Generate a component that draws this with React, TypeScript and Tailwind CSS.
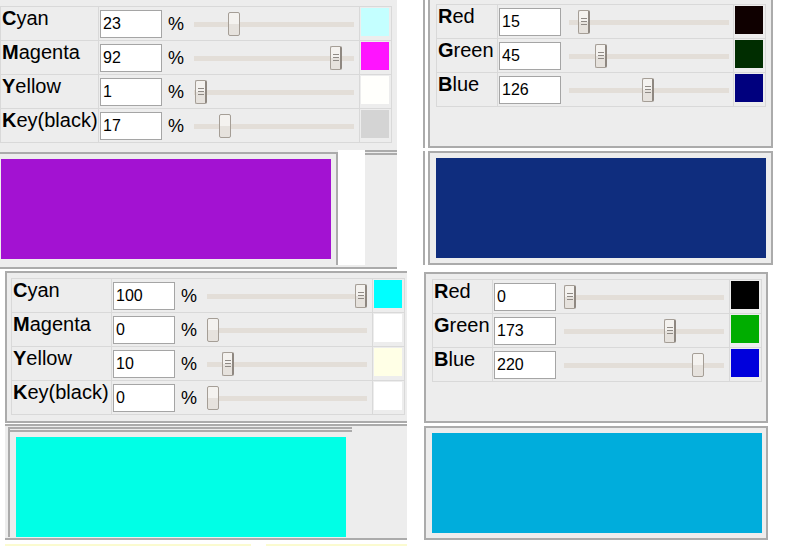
import React from 'react'

type Row = {
  head: string
  rest: string
  value: number
  max: number
  grip: boolean
  swatch: string
}

const cmykTop: Row[] = [
  { head: 'C', rest: 'yan', value: 23, max: 100, grip: false, swatch: '#c4ffff' },
  { head: 'M', rest: 'agenta', value: 92, max: 100, grip: true, swatch: '#ff14ff' },
  { head: 'Y', rest: 'ellow', value: 1, max: 100, grip: true, swatch: '#fffffc' },
  { head: 'K', rest: 'ey(black)', value: 17, max: 100, grip: false, swatch: '#d4d4d4' },
]

const rgbTop: Row[] = [
  { head: 'R', rest: 'ed', value: 15, max: 255, grip: true, swatch: '#0f0000' },
  { head: 'G', rest: 'reen', value: 45, max: 255, grip: true, swatch: '#002d00' },
  { head: 'B', rest: 'lue', value: 126, max: 255, grip: true, swatch: '#00007e' },
]

const cmykBottom: Row[] = [
  { head: 'C', rest: 'yan', value: 100, max: 100, grip: true, swatch: '#00ffff' },
  { head: 'M', rest: 'agenta', value: 0, max: 100, grip: false, swatch: '#ffffff' },
  { head: 'Y', rest: 'ellow', value: 10, max: 100, grip: true, swatch: '#ffffe6' },
  { head: 'K', rest: 'ey(black)', value: 0, max: 100, grip: false, swatch: '#ffffff' },
]

const rgbBottom: Row[] = [
  { head: 'R', rest: 'ed', value: 0, max: 255, grip: true, swatch: '#000000' },
  { head: 'G', rest: 'reen', value: 173, max: 255, grip: true, swatch: '#00ad00' },
  { head: 'B', rest: 'lue', value: 220, max: 255, grip: false, swatch: '#0000dc' },
]

function Slider({ value, max, grip }: { value: number; max: number; grip: boolean }) {
  const left = Math.round((148 * value) / max)
  return (
    <div className="relative w-[160px] h-[24px] shrink-0">
      <div className="absolute left-0 right-0 top-[10px] h-[5px] bg-[#e3ded8]" />
      <div
        className={`absolute top-0 w-[12px] h-[24px] rounded-[2px] bg-[linear-gradient(to_bottom,#f4f2ef_50%,#e6e2dd_50%)] flex flex-col items-center justify-center gap-[2px] ${
          grip
            ? 'border border-r-2 border-[#a59e96] border-r-[#8f8881]'
            : 'border border-[#a59e96]'
        }`}
        style={{ left }}
      >
        {grip && (
          <>
            <div className="w-[6px] h-[1px] bg-[#8f8a85]" />
            <div className="w-[6px] h-[1px] bg-[#8f8a85]" />
            <div className="w-[6px] h-[1px] bg-[#8f8a85]" />
          </>
        )}
      </div>
    </div>
  )
}

function ColorTable({
  rows,
  width,
  labelW,
  percent,
}: {
  rows: Row[]
  width: string
  labelW: string
  percent: boolean
}) {
  return (
    <div className={`${width} border-t border-l border-[#d9d9d9]`}>
      {rows.map((r) => (
        <div key={r.head} className="flex h-[34px] border-b border-[#d9d9d9]">
          <div className={`${labelW} shrink-0 border-r border-[#d9d9d9] pl-[1px] text-[20px] leading-[23px]`}>
            <span className="font-bold">{r.head}</span>
            {r.rest}
          </div>
          <div className="flex-1 flex items-center pl-[1px] border-r border-[#d9d9d9]">
            <input
              readOnly
              value={r.value}
              className="w-[62px] h-[28px] shrink-0 border border-[#a5a5a5] bg-white px-[2px] text-[16px] text-black outline-none"
            />
            {percent ? (
              <>
                <span className="ml-[6px] text-[18px] leading-none">%</span>
                <div className="ml-[10px]">
                  <Slider value={r.value} max={r.max} grip={r.grip} />
                </div>
              </>
            ) : (
              <div className="ml-[8px]">
                <Slider value={r.value} max={r.max} grip={r.grip} />
              </div>
            )}
          </div>
          <div className="w-[32px] shrink-0 border-r border-[#d9d9d9] pt-[1px] pl-[1px]">
            <div className="w-[28px] h-[28px]" style={{ background: r.swatch }} />
          </div>
        </div>
      ))}
    </div>
  )
}

export default function App() {
  return (
    <div className="w-[787px] h-[547px] overflow-hidden bg-white text-black font-['Liberation_Sans',Arial,sans-serif]">
      {/* top half */}
      <div className="flex h-[269px]">
        <div className="w-[397px] flex flex-col bg-[#ededed] border-b-2 border-[#ababab]">
          <div className="h-[150px] pt-[6px]">
            <ColorTable rows={cmykTop} width="w-[392px]" labelW="w-[98px]" percent />
          </div>
          <div className="flex h-[115px]">
            <div className="w-[338px] mt-[2px] border-t-2 border-r-2 border-[#ababab] pt-[5px] pl-[1px]">
              <div className="w-[330px] h-[100px] bg-[#a312d2]" />
            </div>
            <div className="w-[27px] bg-white" />
            <div className="flex-1 border-t-2 border-[#ababab]">
              <div className="mt-[1px] border-t-2 border-[#ababab]" />
            </div>
          </div>
        </div>

        <div className="w-[26px] bg-white" />

        <div className="w-[350px] flex flex-col">
          <div className="h-[148px] border-l-2 border-[#ababab] pl-[3px]">
            <div className="h-full border-2 border-t-0 border-[#ababab] bg-[#ededed] pl-[6px] pt-[4px]">
              <ColorTable rows={rgbTop} width="w-[330px]" labelW="w-[61px]" percent={false} />
            </div>
          </div>
          <div className="h-[3px]" />
          <div className="h-[114px] border-l-2 border-[#ababab] pl-[3px]">
            <div className="h-full border-2 border-[#ababab] bg-[#ededed] pl-[6px] pt-[5px]">
              <div className="w-[330px] h-[100px] bg-[#0f2d7e]" />
            </div>
          </div>
        </div>
      </div>

      {/* bottom half */}
      <div className="flex h-[278px]">
        <div className="w-[410px] flex flex-col">
          <div className="ml-[5px] mt-[2px] w-[402px] h-[152px] border-t-2 border-b-2 border-l-2 border-[#ababab] bg-[#ededed] pl-[4px] pt-[5px]">
            <ColorTable rows={cmykBottom} width="w-[394px]" labelW="w-[100px]" percent />
          </div>
          <div className="ml-[5px] mt-[1px] w-[402px] h-[116px] border-t-2 border-b-2 border-[#ababab] bg-[#ededed]">
            <div className="ml-[3px] mt-[1px] w-[344px] h-[110px] border-l-2 border-t-2 border-[#ababab]">
              <div className="mt-[1px] border-t-2 border-[#ababab] pl-[6px] pt-[5px]">
                <div className="w-[330px] h-[100px] bg-[#00ffe6]" />
              </div>
            </div>
          </div>
          <div className="flex mt-[4px] ml-[5px] gap-[15px]">
            <div className="w-[246px] h-[2px] bg-[#fbfbd0]" />
            <div className="w-[141px] h-[2px] bg-[#fbfbd0]" />
          </div>
        </div>

        <div className="w-[14px]" />

        <div className="w-[344px] flex flex-col">
          <div className="mt-[3px] h-[151px] border-2 border-[#ababab] bg-[#ededed] pl-[6px] pt-[5px]">
            <ColorTable rows={rgbBottom} width="w-[330px]" labelW="w-[60px]" percent={false} />
          </div>
          <div className="mt-[3px] h-[114px] border-2 border-[#ababab] bg-[#ededed] pl-[6px] pt-[5px]">
            <div className="w-[330px] h-[100px] bg-[#00addc]" />
          </div>
        </div>
      </div>
    </div>
  )
}
